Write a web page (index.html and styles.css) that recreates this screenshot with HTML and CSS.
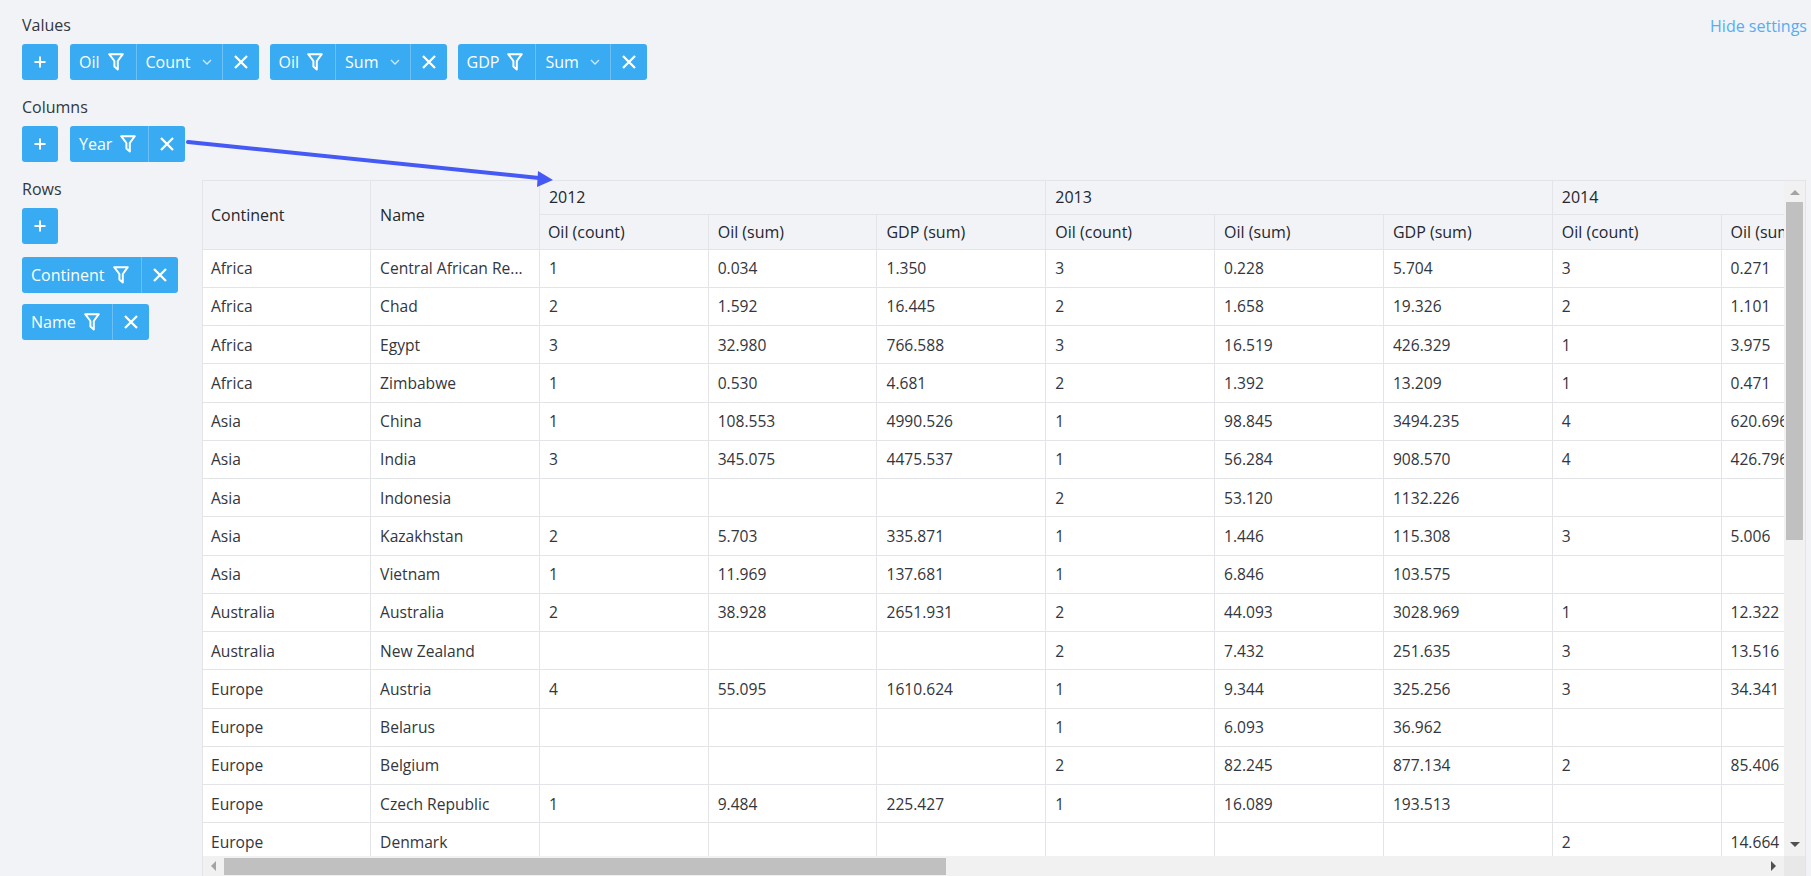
FILE: index.html
```html
<!DOCTYPE html>
<html lang="en">
<head>
    <meta charset="UTF-8">
    <meta name="viewport" content="width=device-width, initial-scale=1.0">
    <title>Pivot table</title>
    <link rel="stylesheet" href="styles.css">
</head>
<body>
    <svg class="defs" width="0" height="0">
        <symbol id="funnel" viewBox="0 0 16 18"><path d="M1.2 1.2h13.6l-5 6.8v8.6L6.4 13.6V8z" fill="none" stroke="#fff" stroke-width="2" stroke-linejoin="round"/></symbol>
        <symbol id="cross" viewBox="0 0 14 14"><path d="M1 1l12 12M13 1L1 13" fill="none" stroke="#fff" stroke-width="2.3"/></symbol>
        <symbol id="plus" viewBox="0 0 12 12"><path d="M6 .5v11M.5 6h11" fill="none" stroke="#fff" stroke-width="2"/></symbol>
        <symbol id="chevron" viewBox="0 0 10 6"><path d="M1 1l4 4 4-4" fill="none" stroke="#cfe9fb" stroke-width="1.3"/></symbol>
    </svg>

    <div class="top-bar">
        <div class="section">
            <div class="section-label">Values</div>
            <div class="chip-row">
                <button class="add-btn"><svg class="icon-plus"><use href="#plus"/></svg></button>
                <div class="chip">
                    <span class="chip-part field">Oil<svg class="icon-funnel"><use href="#funnel"/></svg></span>
                    <span class="chip-part agg">Count<svg class="icon-chevron"><use href="#chevron"/></svg></span>
                    <span class="chip-part close"><svg class="icon-cross"><use href="#cross"/></svg></span>
                </div>
                <div class="chip">
                    <span class="chip-part field">Oil<svg class="icon-funnel"><use href="#funnel"/></svg></span>
                    <span class="chip-part agg">Sum<svg class="icon-chevron"><use href="#chevron"/></svg></span>
                    <span class="chip-part close"><svg class="icon-cross"><use href="#cross"/></svg></span>
                </div>
                <div class="chip">
                    <span class="chip-part field">GDP<svg class="icon-funnel"><use href="#funnel"/></svg></span>
                    <span class="chip-part agg">Sum<svg class="icon-chevron"><use href="#chevron"/></svg></span>
                    <span class="chip-part close"><svg class="icon-cross"><use href="#cross"/></svg></span>
                </div>
            </div>
        </div>
        <a class="hide-link" href="#">Hide settings</a>
    </div>

    <div class="section columns-section">
        <div class="section-label">Columns</div>
        <div class="chip-row">
            <button class="add-btn"><svg class="icon-plus"><use href="#plus"/></svg></button>
            <div class="chip">
                <span class="chip-part field">Year<svg class="icon-funnel"><use href="#funnel"/></svg></span>
                <span class="chip-part close"><svg class="icon-cross"><use href="#cross"/></svg></span>
            </div>
        </div>
        <svg class="arrow" width="380" height="50" viewBox="0 0 380 50"><path d="M3 3L354 39" stroke="#4559f5" stroke-width="4" stroke-linecap="round"/><path d="M353 32l15 9-16 7z" fill="#4559f5"/></svg>
    </div>

    <div class="main">
        <div class="rows-panel">
            <div class="section-label">Rows</div>
            <button class="add-btn"><svg class="icon-plus"><use href="#plus"/></svg></button>
            <div class="chip row-chip">
                <span class="chip-part field">Continent<svg class="icon-funnel"><use href="#funnel"/></svg></span>
                <span class="chip-part close"><svg class="icon-cross"><use href="#cross"/></svg></span>
            </div>
            <div class="chip row-chip">
                <span class="chip-part field">Name<svg class="icon-funnel"><use href="#funnel"/></svg></span>
                <span class="chip-part close"><svg class="icon-cross"><use href="#cross"/></svg></span>
            </div>
        </div>

        <div class="grid-box">
            <div class="grid-view">
                <table class="pivot">
                    <colgroup><col class="col-first"><col><col><col><col><col><col><col><col><col></colgroup>
                    <thead>
                        <tr class="head-top"><th rowspan="2">Continent</th><th rowspan="2">Name</th><th colspan="3">2012</th><th colspan="3">2013</th><th colspan="2">2014</th></tr>
                        <tr class="head-sub"><th>Oil (count)</th><th>Oil (sum)</th><th>GDP (sum)</th><th>Oil (count)</th><th>Oil (sum)</th><th>GDP (sum)</th><th>Oil (count)</th><th>Oil (sum)</th></tr>
                    </thead>
                    <tbody>
                        <tr><td>Africa</td><td>Central African Re...</td><td>1</td><td>0.034</td><td>1.350</td><td>3</td><td>0.228</td><td>5.704</td><td>3</td><td>0.271</td></tr>
                        <tr><td>Africa</td><td>Chad</td><td>2</td><td>1.592</td><td>16.445</td><td>2</td><td>1.658</td><td>19.326</td><td>2</td><td>1.101</td></tr>
                        <tr><td>Africa</td><td>Egypt</td><td>3</td><td>32.980</td><td>766.588</td><td>3</td><td>16.519</td><td>426.329</td><td>1</td><td>3.975</td></tr>
                        <tr><td>Africa</td><td>Zimbabwe</td><td>1</td><td>0.530</td><td>4.681</td><td>2</td><td>1.392</td><td>13.209</td><td>1</td><td>0.471</td></tr>
                        <tr><td>Asia</td><td>China</td><td>1</td><td>108.553</td><td>4990.526</td><td>1</td><td>98.845</td><td>3494.235</td><td>4</td><td>620.696</td></tr>
                        <tr><td>Asia</td><td>India</td><td>3</td><td>345.075</td><td>4475.537</td><td>1</td><td>56.284</td><td>908.570</td><td>4</td><td>426.796</td></tr>
                        <tr><td>Asia</td><td>Indonesia</td><td></td><td></td><td></td><td>2</td><td>53.120</td><td>1132.226</td><td></td><td></td></tr>
                        <tr><td>Asia</td><td>Kazakhstan</td><td>2</td><td>5.703</td><td>335.871</td><td>1</td><td>1.446</td><td>115.308</td><td>3</td><td>5.006</td></tr>
                        <tr><td>Asia</td><td>Vietnam</td><td>1</td><td>11.969</td><td>137.681</td><td>1</td><td>6.846</td><td>103.575</td><td></td><td></td></tr>
                        <tr><td>Australia</td><td>Australia</td><td>2</td><td>38.928</td><td>2651.931</td><td>2</td><td>44.093</td><td>3028.969</td><td>1</td><td>12.322</td></tr>
                        <tr><td>Australia</td><td>New Zealand</td><td></td><td></td><td></td><td>2</td><td>7.432</td><td>251.635</td><td>3</td><td>13.516</td></tr>
                        <tr><td>Europe</td><td>Austria</td><td>4</td><td>55.095</td><td>1610.624</td><td>1</td><td>9.344</td><td>325.256</td><td>3</td><td>34.341</td></tr>
                        <tr><td>Europe</td><td>Belarus</td><td></td><td></td><td></td><td>1</td><td>6.093</td><td>36.962</td><td></td><td></td></tr>
                        <tr><td>Europe</td><td>Belgium</td><td></td><td></td><td></td><td>2</td><td>82.245</td><td>877.134</td><td>2</td><td>85.406</td></tr>
                        <tr><td>Europe</td><td>Czech Republic</td><td>1</td><td>9.484</td><td>225.427</td><td>1</td><td>16.089</td><td>193.513</td><td></td><td></td></tr>
                        <tr><td>Europe</td><td>Denmark</td><td></td><td></td><td></td><td></td><td></td><td></td><td>2</td><td>14.664</td></tr>
                    </tbody>
                </table>
            </div>
            <div class="vbar">
                <span class="tri tri-up"></span>
                <div class="vtrack"><div class="vthumb"></div></div>
                <span class="tri tri-down"></span>
            </div>
            <div class="hbar">
                <span class="tri tri-left"></span>
                <div class="htrack"><div class="hthumb"></div></div>
                <span class="tri tri-right"></span>
            </div>
            <div class="corner"></div>
        </div>
    </div>
</body>
</html>
```
FILE: styles.css
```css
html, body {
    height: 100%;
    margin: 0;
}
body {
    font-family: "Open Sans", "Noto Sans", sans-serif;
    font-size: 16px;
    line-height: 21px;
    color: #33363d;
    background-color: #f1f3f7;
    padding: 15px 5px 0 22px;
    box-sizing: border-box;
    overflow: hidden;
}
.defs {
    display: block;
    height: 0;
}
.top-bar {
    display: flex;
    justify-content: space-between;
    align-items: flex-start;
}
.hide-link {
    color: #55adf5;
    text-decoration: none;
    margin-top: 1px;
    margin-right: -1px;
}
.section {
    margin-bottom: 17px;
}
.section-label {
    margin-bottom: 8px;
}
.columns-section {
    position: relative;
}
.arrow {
    position: absolute;
    left: 163px;
    top: 42px;
    overflow: visible;
}
.chip-row {
    display: flex;
    gap: 10.5px;
}
.chip-row .add-btn {
    margin-right: 1.5px;
}
.add-btn {
    display: flex;
    align-items: center;
    justify-content: center;
    width: 36px;
    height: 36px;
    padding: 0;
    border: none;
    border-radius: 3px;
    background: #38abf2;
}
.icon-plus {
    width: 12px;
    height: 12px;
}
.chip {
    display: inline-flex;
    height: 36px;
    border-radius: 3px;
    background: #38abf2;
    color: #fff;
}
.chip-part {
    display: flex;
    align-items: center;
    height: 100%;
    box-sizing: border-box;
}
.chip-part + .chip-part {
    border-left: 1px solid #6cc0f5;
}
.field {
    padding: 0 12px 0 9px;
}
.agg {
    padding: 0 10.5px 0 9px;
}
.close {
    justify-content: center;
    width: 37px;
}
.icon-funnel {
    width: 16px;
    height: 18px;
    margin-left: 8px;
}
.icon-chevron {
    width: 10px;
    height: 6px;
    margin-left: 11px;
}
.icon-cross {
    width: 14px;
    height: 14px;
}
.main {
    display: flex;
    align-items: flex-start;
}
.rows-panel {
    flex: 0 0 180px;
}
.rows-panel .add-btn {
    margin-bottom: 13px;
}
.row-chip {
    display: flex;
    width: fit-content;
    margin-bottom: 11px;
}
.grid-box {
    display: grid;
    grid-template-columns: 1fr 21px;
    grid-template-rows: 675px 20px;
    flex: 1;
    min-width: 0;
    margin-top: 1px;
    border: 1px solid #e3e4e8;
    border-bottom: none;
    box-sizing: border-box;
}
.grid-view {
    overflow: hidden;
}
.pivot {
    border-collapse: collapse;
    table-layout: fixed;
    width: 1686px;
}
.pivot col {
    width: 168.8px;
}
.pivot .col-first {
    width: 167.6px;
}
.pivot th, .pivot td {
    padding: 0 8px 0 9px;
    border: 1px solid #e3e4e8;
    text-align: left;
    white-space: nowrap;
    box-sizing: border-box;
}
.pivot tr > :first-child {
    padding-left: 8px;
    border-left: none;
}
.pivot thead tr:first-child th {
    border-top: none;
}
.pivot th {
    font-weight: 500;
    color: #24272e;
    background: #f1f3f7;
}
.pivot th[rowspan] {
    padding-top: 1px;
}
.head-top th {
    height: 33px;
}
.head-sub th {
    height: 35px;
    padding-top: 1px;
}
.pivot td {
    height: 38.25px;
    padding-top: 1px;
    font-size: 15.6px;
    background: #fff;
}
.vbar, .hbar {
    display: flex;
    align-items: center;
    background: #f1f1f1;
}
.vbar {
    flex-direction: column;
}
.vtrack {
    flex: 1;
    width: 100%;
}
.vthumb {
    width: 17px;
    height: 338px;
    margin: 0 auto;
    background: #c0c0c0;
}
.htrack {
    flex: 1;
}
.hthumb {
    width: 722px;
    height: 17px;
    background: #c0c0c0;
}
.corner {
    background: #e8e8e8;
}
.tri {
    flex: none;
    display: block;
    width: 0;
    height: 0;
    border-style: solid;
    border-color: transparent;
}
.tri-up {
    margin: 9px 0 7px;
    border-width: 0 5px 5px;
    border-bottom-color: #a3a3a3;
}
.tri-down {
    margin: 7px 0 9px;
    border-width: 5px 5px 0;
    border-top-color: #505050;
}
.tri-left {
    margin: 0 8px;
    border-width: 5px 5px 5px 0;
    border-right-color: #a3a3a3;
}
.tri-right {
    margin: 0 8px;
    border-width: 5px 0 5px 5px;
    border-left-color: #505050;
}
```
